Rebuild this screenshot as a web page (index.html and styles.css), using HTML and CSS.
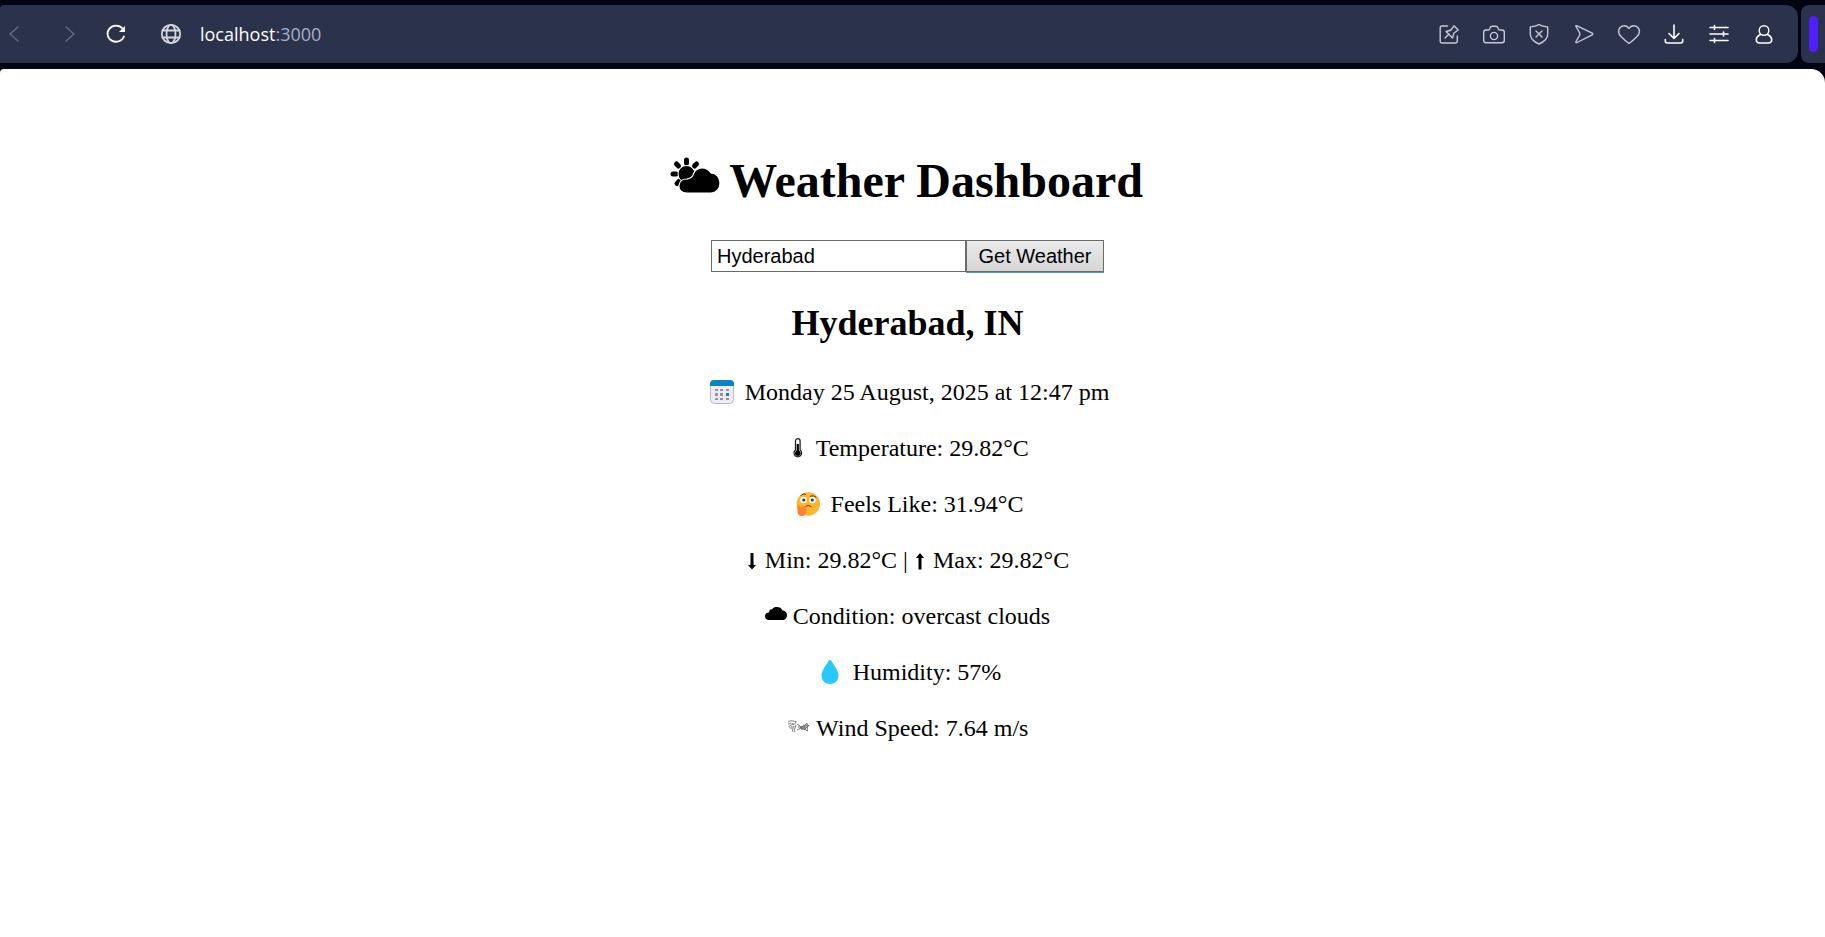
FILE: index.html
```
<!DOCTYPE html>
<html lang="en">
<head>
<meta charset="utf-8">
<title>Weather Dashboard</title>
<link rel="stylesheet" href="styles.css">
</head>
<body>
<header class="chrome">
  <div class="toolbar">
    <nav class="nav" aria-label="Browser navigation">
      <button class="tool dim" aria-label="Back"><svg width="24" height="24" viewBox="0 0 24 24"><path d="M16 5 8 12l8 7"/></svg></button>
      <button class="tool dim" aria-label="Forward"><svg width="24" height="24" viewBox="0 0 24 24"><path d="m8 5 8 7-8 7"/></svg></button>
      <button class="tool bright" aria-label="Reload"><svg width="24" height="24" viewBox="0 0 24 24"><path stroke-width="1.8" d="M18.500 6.500A8.500 8 0 1 0 20 14.500"/><path class="solid" d="M21 4v6h-6z"/></svg></button>
    </nav>
    <div class="address">
      <svg class="globe" width="24" height="24" viewBox="0 0 24 24"><circle cx="12" cy="12" r="9.200"/><ellipse cx="12" cy="12" rx="4.500" ry="9.200"/><path d="M3.500 8.500h17M3.500 15.500h17"/></svg>
      <span class="url">localhost<span class="port">:3000</span></span>
    </div>
    <div class="actions">
      <button class="tool" aria-label="Pin page"><svg width="24" height="24" viewBox="0 0 24 24"><path d="M10.500 4H5a1.800 1.800 0 0 0-1.800 1.800v13.400A1.800 1.800 0 0 0 5 21h13.500a1.800 1.800 0 0 0 1.800-1.800V14M8 16l4-4M9 9.500c2-.8 3.500-.8 5-1.500l3-4.200 4.200 4.200-4.200 3c-.7 1.500-.7 3-1.500 5z"/></svg></button>
      <button class="tool" aria-label="Snapshot"><svg width="24" height="24" viewBox="0 0 24 24"><path d="M4 8h2.500c1 0 1-.5 1.300-1.500C8.200 5 8.700 4.300 10 4.300h4c1.300 0 1.800.7 2.200 2.200.3 1 .3 1.500 1.300 1.500H20c1.500 0 2.300.8 2.300 2.300v8c0 1.500-.8 2.500-2.300 2.500H4c-1.500 0-2.300-1-2.300-2.500v-8C1.700 8.800 2.500 8 4 8z"/><circle cx="12" cy="14" r="3.600"/></svg></button>
      <button class="tool" aria-label="Shield"><svg width="24" height="24" viewBox="0 0 24 24"><path d="M12 2.500C9.500 4.300 7 4.500 3.300 5v7c0 5 4 8 8.700 10 4.700-2 8.700-5 8.700-10V5C17 4.500 14.500 4.300 12 2.500zM9 9l6 6M15 9l-6 6"/></svg></button>
      <button class="tool" aria-label="Send"><svg width="24" height="24" viewBox="0 0 24 24"><path d="M4 4.500C3.500 3.700 4.300 3.500 5 3.800l15.200 7.400c.8.400.8 1.200 0 1.600L5 20.500c-.8.400-1.500 0-1-1L7.500 13.500c.5-1 .5-2 0-3z"/></svg></button>
      <button class="tool" aria-label="Favourite"><svg width="24" height="24" viewBox="0 0 24 24"><path d="M12 6.500C10 3 5 2.800 2.700 6c-2 3-.8 6.500 1.800 9 2.500 2.500 4.500 4.500 7.500 6.500 3-2 5-4 7.500-6.500 2.600-2.500 3.800-6 1.800-9C19 2.800 14 3 12 6.500z"/></svg></button>
      <button class="tool bright" aria-label="Downloads"><svg width="24" height="24" viewBox="0 0 24 24"><path stroke-width="1.600" d="M12 3v13M7 11.500l5 5 5-5M3.300 17.500v1.500a2 2 0 0 0 2 2h13.400a2 2 0 0 0 2-2v-1.500"/></svg></button>
      <button class="tool bright" aria-label="Easy setup"><svg width="24" height="24" viewBox="0 0 24 24"><path stroke-width="1.600" d="M3 5.500h18M3 12h18M3 18.500h18M7.500 3.500v4M16.500 10v4M7.500 16.500v4"/></svg></button>
      <button class="tool bright" aria-label="Profile"><svg width="24" height="24" viewBox="0 0 24 24"><circle cx="12" cy="8.500" r="4.800"/><path stroke-width="1.600" d="M8.500 12.500C6 13.700 4.300 15.500 4.300 17.700c0 2.300 1.500 3.300 3.700 3.300h8c2.200 0 3.700-1 3.700-3.300 0-2.200-1.700-4-4.200-5.200"/></svg></button>
    </div>
  </div>
  <div class="side"><span class="pill"></span></div>
</header>
<main class="page">
  <h1 class="title"><svg class="icon-title" width="50" height="36" viewBox="0 0 50 36" aria-hidden="true"><g stroke="#000" stroke-width="5" stroke-linecap="round"><path d="M16.500 3v3M6.500 7l2 2M26.500 7l-2 2M3 17h3M7 26.500l2-2"/></g><circle cx="16.500" cy="17" r="8.500" stroke="#fff" stroke-width="1"/><path stroke="#fff" stroke-width="1.200" d="M17 36C11 36 8.500 32 9 28.500c.5-4 3.500-6.500 7.500-6.500 2.500-.5 5-.5 6.500-4 1.500-4.500 5-7 9-7 4 0 7 2 9 5 5 0 9 4 9 10s-4 10-9 10z"/></svg> Weather Dashboard</h1>
  <form class="search">
    <input class="city" type="text" value="Hyderabad" aria-label="City">
    <button class="submit" type="button">Get Weather</button>
  </form>
  <section class="report">
    <h2 class="place">Hyderabad, IN</h2>
    <p class="line"><svg class="emoji" width="24" height="24" viewBox="0 0 24 24" aria-hidden="true"><rect x=".5" y=".5" width="23" height="23" rx="4" fill="#efecf6" stroke="#bcb5cc"/><path fill="#0982c8" d="M0 6V4a4 4 0 0 1 4-4h16a4 4 0 0 1 4 4v2z"/><path fill="#998ea4" d="M5 9h3v2H5zm5 0h3v2h-3zm6 0h3v2h-3zM5 13h3v3H5zm5 0h3v3h-3zM5 18h3v2H5zm5 0h3v2h-3zm6 0h3v2h-3z"/><path fill="#0982c8" d="M16 13h3v3h-3z"/></svg> Monday 25 August, 2025 at 12:47 pm</p>
    <p class="line"><svg class="glyph" width="24" height="20" viewBox="0 0 24 20" aria-hidden="true"><path fill="#fff" stroke="#222" stroke-width="1.300" d="M9.500 12V3a2.300 2.300 0 0 1 4.600 0v9a3.800 3.800 0 1 1-4.600 0z"/><path d="M10.700 6h2.200v6.500a2.900 2.900 0 1 1-2.200 0z"/></svg> Temperature: 29.82°C</p>
    <p class="line"><svg class="emoji" width="24" height="24" viewBox="0 0 24 24" aria-hidden="true"><circle cx="12.300" cy="12" r="11.700" fill="#fdb52b"/><circle cx="7.500" cy="8" r="3.300" fill="#fff"/><circle cx="16.500" cy="8" r="3.300" fill="#fff"/><circle cx="7.800" cy="8" r="1.600" fill="#40303a"/><circle cx="16.200" cy="8" r="1.600" fill="#40303a"/><path fill="none" stroke="#51302c" stroke-linecap="round" d="M5 3.500C6 2 8 1.700 9.500 2.300M14.500 4.200c2-.8 4-.3 5.500 1M9 15c1.500-2 5-2 6.300 0"/><path fill="#fd8130" d="M1.500 14c1-1 2.200-.3 2.500 1.500 2-1 4.500-1.800 6-1 .8.700 0 1.400-1.200 1.800l1.600.4c1 .5.500 1.500-.4 1.600.2 3.300-1 5.700-4 5.700-3 0-4.500-1.600-4.500-4.500z"/></svg> Feels Like: 31.94°C</p>
    <p class="line"><svg class="arrow" width="13" height="18" viewBox="0 0 13 18" aria-hidden="true"><path d="M4.500 1h3v12H10l-4 4.500L2 13h2.500z"/></svg> Min: 29.82°C | <svg class="arrow" width="13" height="18" viewBox="0 0 13 18" aria-hidden="true"><path d="M4.500 17.500h3V6H10L6 1 2 6h2.500z"/></svg> Max: 29.82°C</p>
    <p class="line"><svg class="cloud" width="22" height="13" viewBox="0 0 22 13" aria-hidden="true"><path d="M4 13C1.500 13 0 11.500 0 9.300 0 7 1.500 5.500 4 5.500 4 3.300 5 2.300 7 2.300 8.500 0 10.500 0 12 0c2.500 0 4.500 1 5.200 3.300C20 3.600 22 5.500 22 8c0 3-2 5-4.500 5z"/></svg> Condition: overcast clouds</p>
    <p class="line"><svg class="emoji" width="24" height="24" viewBox="0 0 24 24" aria-hidden="true"><path fill="#26c9fc" d="M12 0c.7 0 1.200.5 1.500 1C16 5.500 20.500 10.500 20.500 15.500c0 5-4 8.500-8.500 8.500s-8.500-3.500-8.500-8.500C3.500 10.500 8 5.500 10.500 1c.3-.5.800-1 1.500-1z"/></svg> Humidity: 57%</p>
    <p class="line"><svg class="wind" width="24" height="14" viewBox="0 0 24 14" aria-hidden="true"><g fill="none" stroke="#555" stroke-width=".8"><path d="M1 2c3-2 6-1 8 0M1 4c2-1 4 0 6 1M2 7c0-2 3-2 3 0S3 9 3 7M6 12c-1-2 0-4 1-6M8 12c-1-2 0-4 1-7M5 3c2 2 4 1 4-2M10 4l4 3 3-1 3-3M10 10l4-2 3 1 4 2M11 7h8M16 5l6 1M17 10l5-5M20 3c0 3 1 5 0 8M14 7h4v2h-4z"/></g></svg> Wind Speed: 7.64 m/s</p>
  </section>
</main>
</body>
</html>
```
FILE: styles.css
```
* { box-sizing: border-box; }
body {
  margin: 0;
  min-height: 100vh;
  display: flex;
  flex-direction: column;
  background: #020414;
  color: #000;
  font: 24px/32px "Liberation Serif", "Times New Roman", serif;
}
.chrome {
  display: flex;
  gap: 3px;
  padding: 5px 0 6px;
}
.toolbar {
  flex: 1;
  display: flex;
  align-items: center;
  height: 58px;
  padding-right: 12px;
  border-radius: 4px 12px 12px 0;
  background: #2b324c;
}
.nav { display: flex; gap: 16px; margin-left: -6px; }
.tool {
  display: flex;
  justify-content: center;
  align-items: center;
  width: 40px;
  height: 40px;
  padding: 0;
  border: 0;
  background: none;
  color: #c6cad8;
}
.dim { color: #656c84; }
.bright { color: #fff; }
.tool svg, .globe {
  fill: none;
  stroke: currentColor;
  stroke-width: 1.4;
  stroke-linecap: round;
  stroke-linejoin: round;
}
.tool .solid { fill: currentColor; stroke: none; }
.nav .tool:last-child { margin-left: -10px; }
.address {
  flex: 1;
  display: flex;
  align-items: center;
  gap: 17px;
  margin-left: 23px;
  color: #fff;
  font: 18px/24px "Open Sans", "Noto Sans", sans-serif;
}
.globe { color: #d3d5df; stroke-width: 1.8; }
.port { color: #a9afc4; }
.actions { display: flex; gap: 5px; padding-right: 2px; }
.side {
  width: 24px;
  padding: 11px 7px 11px 8px;
  border-radius: 8px 0 0 8px;
  background: #2b324c;
}
.pill { display: block; height: 36px; border-radius: 5px; background: #501eff; }
.page {
  flex: 1;
  padding: 82px 10px 32px 0;
  border-radius: 4px 14px 0 0;
  background: #fff;
  text-align: center;
}
.title { margin: 0 0 30px; font-size: 48px; line-height: 59px; }
.icon-title { margin: 0 -2px; vertical-align: 4px; }
.search { display: flex; justify-content: center; }
.city, .submit {
  height: 32px;
  border: 1px solid #6b6b6b;
  border-radius: 0;
  color: #000;
  font: 20px "Liberation Sans", Arial, sans-serif;
}
.city { width: 255px; padding: 0 5px; background: #fff; }
.submit {
  width: 138px;
  padding: 0;
  background: linear-gradient(#eaeaea, #d6d6d6);
  box-shadow: 0 1px #4f9cb8;
}
.place { margin: 30px 0 32px; font-size: 36px; line-height: 42px; }
.line { margin: 24px 0; }
.emoji { margin: 0 5px 0 4px; vertical-align: -4px; }
.glyph, .arrow { vertical-align: -2px; }
.cloud { vertical-align: 4px; }
.wind { vertical-align: 2px; }
```
